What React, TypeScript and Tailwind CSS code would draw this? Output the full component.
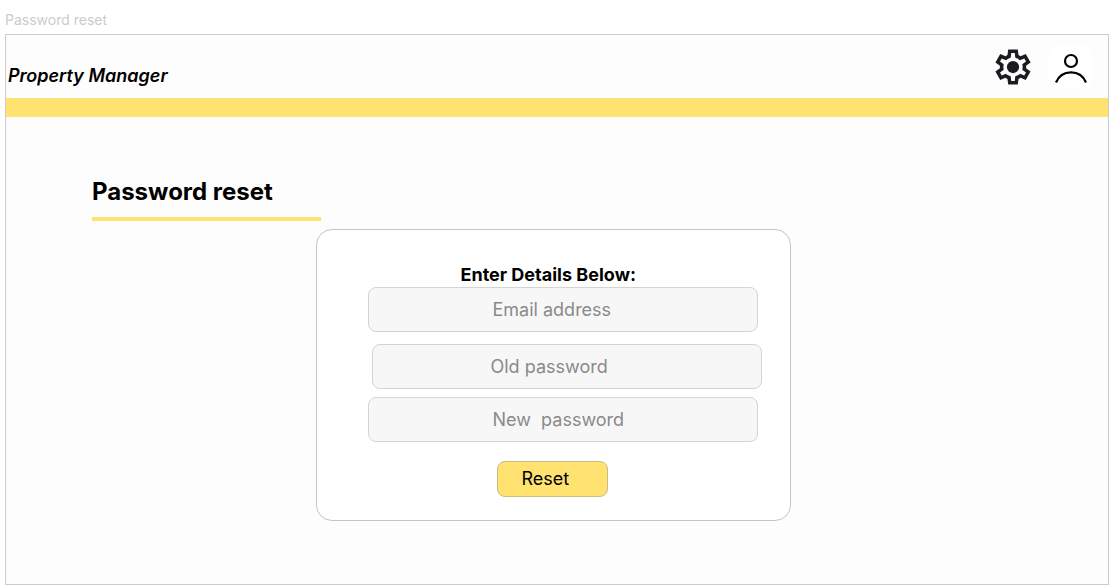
import React from "react";

function SettingsIcon() {
  return (
    <svg viewBox="0 -960 960 960" className="size-[42px]" fill="#1d1b20" aria-hidden="true">
      <path d="m370-80-16-128q-13-5-24.5-12T307-235l-119 50L78-375l103-78q-1-7-1-13.5v-27q0-6.5 1-13.5L78-585l110-190 119 50q11-8 23-15t24-12l16-128h220l16 128q13 5 24.5 12t22.5 15l119-50 110 190-103 78q1 7 1 13.5v27q0 6.5-2 13.5l103 78-110 190-118-50q-11 8-23 15t-24 12L590-80H370Zm70-80h79l14-106q31-8 57.5-23.5T639-327l99 41 39-68-86-65q5-14 7-29.5t2-31.5q0-16-2-31.5t-7-29.5l86-65-39-68-99 42q-22-23-48.5-38.5T533-694l-13-106h-79l-14 106q-31 8-57.5 23.5T321-633l-99-41-39 68 86 64q-5 15-7 30t-2 32q0 16 2 31t7 30l-86 65 39 68 99-42q22 23 48.5 38.5T427-266l13 106Z" />
      <circle cx="480" cy="-480" r="140" />
    </svg>
  );
}

function UserIcon() {
  return (
    <svg viewBox="0 0 44 44" className="size-11" fill="none" stroke="#000" strokeWidth="2.2" aria-hidden="true">
      <circle cx="22" cy="16" r="6" />
      <path d="M7 37.5C9.6 31 15.2 27.3 22 27.3S34.4 31 37 37.5" />
    </svg>
  );
}

const fieldClass =
  "block h-[45px] w-full rounded-lg border border-[#d4d4d4] bg-[#f7f7f7] pr-4 text-lg text-black placeholder:text-[#8a8a8a] placeholder:opacity-100";

export default function App() {
  return (
    <div className="flex min-h-screen flex-col bg-white px-[5px] pb-[3px] font-['Inter',sans-serif] text-black">
      <p className="pt-2.5 pb-1 text-sm leading-5 text-[#cccccc]">Password reset</p>
      <div className="mr-[-1px] flex flex-1 flex-col border border-[#cccccc] bg-[#fdfdfd]">
        <header className="flex h-[63px] items-center justify-between pr-[15px] pl-0.5">
          <span className="pt-[18px] text-lg leading-6 font-semibold italic">Property Manager</span>
          <div className="flex items-center gap-[15px]">
            <button type="button" aria-label="Settings">
              <SettingsIcon />
            </button>
            <button type="button" aria-label="Account" className="rounded-xl bg-white">
              <UserIcon />
            </button>
          </div>
        </header>
        <div className="h-[19px] bg-[#ffe270]" />
        <main className="pt-[59px] pr-2">
          <h1 className="ml-[86px] w-[229px] border-b-4 border-[#ffe270] pb-[9px] text-2xl leading-8 font-bold">
            Password reset
          </h1>
          <form
            className="mx-auto mt-2 mb-6 w-full max-w-[475px] rounded-2xl border border-[#c4c4c4] bg-white pt-[33px] pr-8 pb-[23px] pl-[51px]"
            onSubmit={(event) => event.preventDefault()}
          >
            <h2 className="pl-[93px] text-lg leading-6 font-bold">Enter Details Below:</h2>
            <input type="email" aria-label="Email address" placeholder="Email address" className={`${fieldClass} pl-[124px]`} />
            <div className="mt-3 mb-2 -mr-1 ml-1">
              <input type="password" aria-label="Old password" placeholder="Old password" className={`${fieldClass} pl-[118px]`} />
            </div>
            <input type="password" aria-label="New password" placeholder="New  password" className={`${fieldClass} pl-[124px]`} />
            <button
              type="submit"
              className="mt-[19px] ml-[129px] block h-9 w-[111px] rounded-lg border border-[#c9bd84] bg-[#ffe270] pl-6 text-left text-lg leading-6"
            >
              Reset
            </button>
          </form>
        </main>
      </div>
    </div>
  );
}
